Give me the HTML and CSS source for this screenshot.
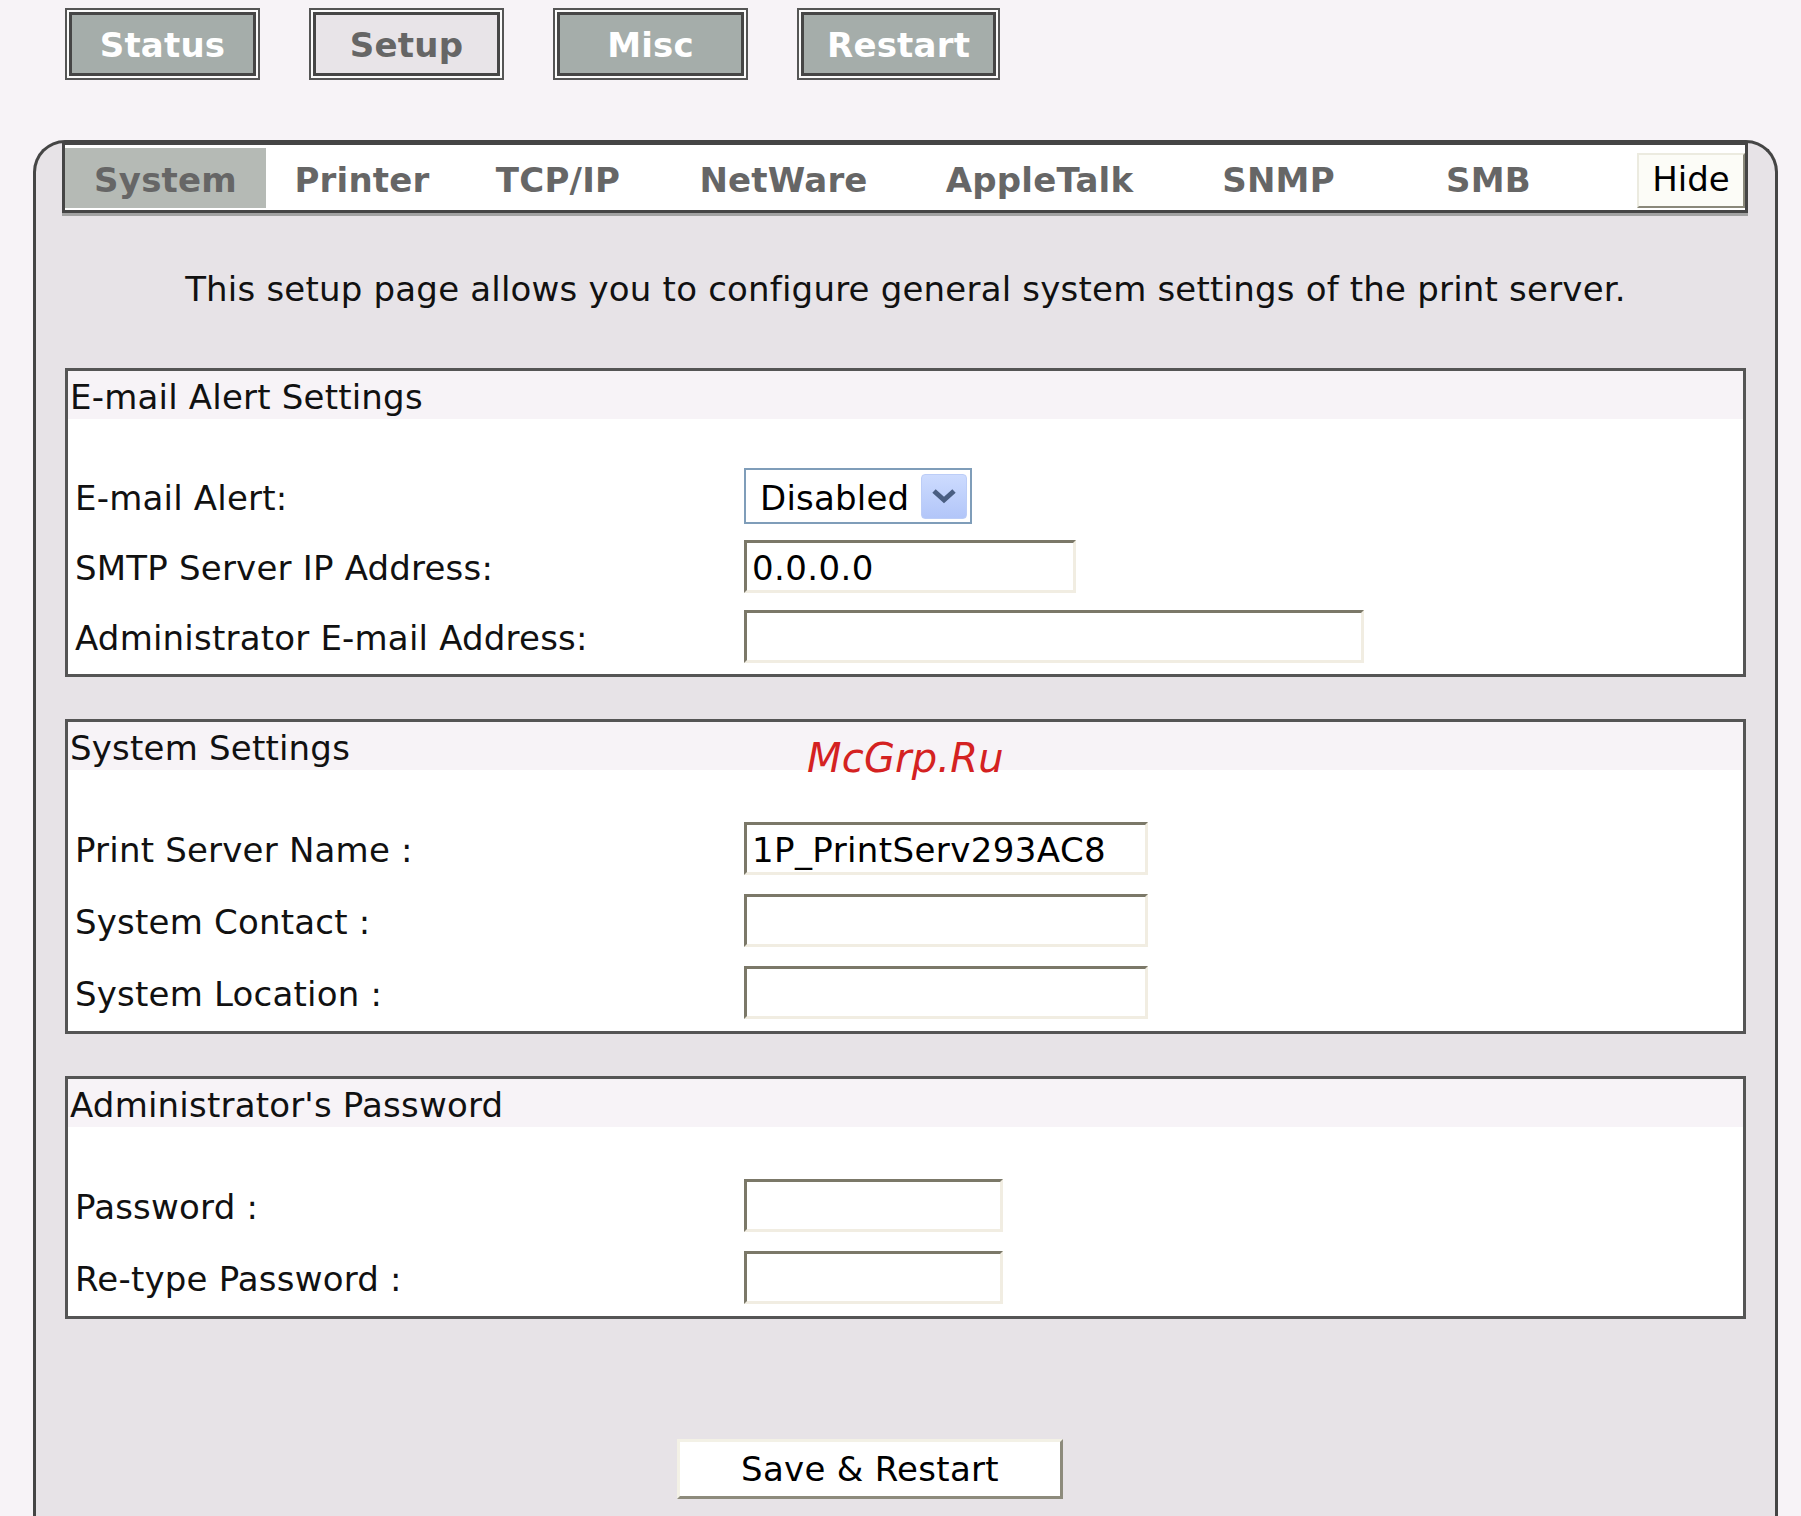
FILE: index.html
```html
<!DOCTYPE html>
<html lang="en">
<head>
    <meta charset="UTF-8">
    <meta name="viewport" content="width=device-width, initial-scale=1.0">
    <title>Setup - System</title>
    <link rel="stylesheet" href="styles.css">
</head>
<body>

    <div class="topnav">
        <a href="#" class="navbtn">Status</a>
        <a href="#" class="navbtn current">Setup</a>
        <a href="#" class="navbtn">Misc</a>
        <a href="#" class="navbtn">Restart</a>
    </div>

    <div class="panel">
        <div class="tabbar">
            <a href="#" class="tab active">System</a>
            <a href="#" class="tab">Printer</a>
            <a href="#" class="tab">TCP/IP</a>
            <a href="#" class="tab">NetWare</a>
            <a href="#" class="tab">AppleTalk</a>
            <a href="#" class="tab">SNMP</a>
            <a href="#" class="tab">SMB</a>
            <span></span>
            <button type="button" class="hide-btn">Hide</button>
        </div>

        <p class="intro">This setup page allows you to configure general system settings of the print server.</p>

        <form>
            <div class="group alert">
                <div class="group-title">E-mail Alert Settings</div>
                <div class="group-body">
                    <div class="row">
                        <label>E-mail Alert:</label>
                        <div class="select">
                            <span>Disabled</span>
                            <span class="select-btn">
                                <svg width="26" height="16" viewBox="0 0 26 16"><path d="M3 3 L13 12 L23 3" fill="none" stroke="#4a5e82" stroke-width="5"/></svg>
                            </span>
                        </div>
                    </div>
                    <div class="row">
                        <label for="smtp">SMTP Server IP Address:</label>
                        <input type="text" id="smtp" class="field-ip" value="0.0.0.0">
                    </div>
                    <div class="row">
                        <label for="admin-mail">Administrator E-mail Address:</label>
                        <input type="text" id="admin-mail" class="field-wide">
                    </div>
                </div>
            </div>

            <div class="group system">
                <div class="group-title">System Settings</div>
                <div class="watermark">McGrp.Ru</div>
                <div class="group-body">
                    <div class="row">
                        <label for="ps-name">Print Server Name :</label>
                        <input type="text" id="ps-name" class="field-name" value="1P_PrintServ293AC8">
                    </div>
                    <div class="row">
                        <label for="contact">System Contact :</label>
                        <input type="text" id="contact" class="field-name">
                    </div>
                    <div class="row">
                        <label for="location">System Location :</label>
                        <input type="text" id="location" class="field-name">
                    </div>
                </div>
            </div>

            <div class="group">
                <div class="group-title">Administrator's Password</div>
                <div class="group-body">
                    <div class="row">
                        <label for="pass">Password :</label>
                        <input type="password" id="pass" class="field-pass">
                    </div>
                    <div class="row">
                        <label for="pass2">Re-type Password :</label>
                        <input type="password" id="pass2" class="field-pass">
                    </div>
                </div>
            </div>

            <div class="actions">
                <button type="submit" class="save-btn">Save &amp; Restart</button>
            </div>
        </form>
    </div>

</body>
</html>
```

FILE: styles.css
```css
body {
    font-family: 'DejaVu Sans', Verdana, sans-serif;
    font-size: 34px;
    letter-spacing: 0.2px;
    margin: 0;
    padding: 0;
    background: #f7f3f7;
    color: #111;
    overflow: hidden;
}

/* top navigation */
.topnav {
    display: flex;
    gap: 49px;
    padding: 8px 0 0 65px;
}
.navbtn {
    box-sizing: border-box;
    height: 72px;
    min-width: 195px;
    padding: 5px 28px 0;
    border: 2px solid #555;
    box-shadow: inset 0 0 0 2px #fbfbfb, inset 0 0 0 5px #464646;
    background: #a5adaa;
    color: #fff;
    font-weight: bold;
    line-height: 61px;
    text-align: center;
    text-decoration: none;
}
.navbtn.current {
    background: #e8e4e8;
    color: #666;
}

/* main panel */
.panel {
    margin: 60px 23px 0 33px;
    border: 3px solid #454545;
    border-bottom: 0;
    border-radius: 32px 32px 0 0;
    background: #e7e3e7;
    padding-bottom: 60px;
}
.tabbar {
    display: grid;
    grid-template-columns: 201px 192px 200px 251px 261px 217px 203px 1fr 108px;
    margin: 0 27px 0 26px;
    padding: 3px 0 2px;
    border: 3px solid #454545;
    border-top-width: 2px;
    background: #fff;
    box-shadow: 0 3px 0 #a2a2a2;
}
.tab {
    box-sizing: border-box;
    height: 60px;
    padding-top: 5px;
    line-height: 55px;
    text-align: center;
    font-weight: bold;
    color: #666;
    text-decoration: none;
}
.tab.active {
    background: #b5bab5;
}
.hide-btn {
    align-self: end;
    height: 55px;
    padding: 0 0 3px;
    border: 2px solid;
    border-color: #ecebe0 #8a887a #8a887a #ecebe0;
    background: #fcfcf7;
    font-family: inherit;
    font-size: 34px;
    color: #000;
}

.intro {
    margin: 56px 0 0;
    line-height: 40px;
    text-align: center;
    color: #111;
}

/* setting groups */
.group {
    position: relative;
    margin: 59px 29px 0;
    border: 3px solid #555;
    background: #fff;
}
.group + .group {
    margin-top: 42px;
}
.group-title {
    box-sizing: border-box;
    height: 48px;
    padding: 4px 0 0 2px;
    line-height: 44px;
    background: #f7f3f7;
}
.group-body {
    padding: 42px 0 3px;
}
.row {
    display: grid;
    grid-template-columns: 676px auto;
    align-items: center;
    height: 72px;
}
.alert .row {
    height: 70px;
}
.row label {
    padding: 4px 0 0 7px;
    line-height: 40px;
}
.row input {
    box-sizing: border-box;
    height: 53px;
    padding: 4px 5px 0;
    border: 3px solid;
    border-color: #7b7868 #f1ede2 #f1ede2 #7b7868;
    background: #fff;
    font-family: inherit;
    font-size: 34px;
    letter-spacing: 0.4px;
    color: #000;
    outline: none;
}
.field-ip { width: 332px; }
.field-wide { width: 620px; }
.field-name { width: 404px; }
.field-pass { width: 259px; }

.select {
    box-sizing: border-box;
    display: flex;
    align-items: center;
    width: 228px;
    height: 56px;
    padding: 3px 3px 0 14px;
    border: 2px solid #7f9db9;
    background: #fff;
    color: #000;
}
.select-btn {
    box-sizing: border-box;
    display: flex;
    align-items: center;
    justify-content: center;
    width: 46px;
    height: 45px;
    margin: -3px 0 0 auto;
    border: 1px solid #bccdf7;
    border-radius: 4px;
    background: linear-gradient(#cddbfe, #b2c6f9);
}

.watermark {
    position: absolute;
    left: 739px;
    top: 16px;
    font-size: 40px;
    font-style: italic;
    line-height: 1;
    color: #d42121;
}

.actions {
    padding: 120px 0 0 641px;
}
.save-btn {
    box-sizing: border-box;
    width: 386px;
    height: 60px;
    border: 3px solid;
    border-color: #f3f1e6 #8d8b7c #8d8b7c #f3f1e6;
    background: #fff;
    font-family: inherit;
    font-size: 34px;
    letter-spacing: 0.3px;
    color: #000;
}
```
